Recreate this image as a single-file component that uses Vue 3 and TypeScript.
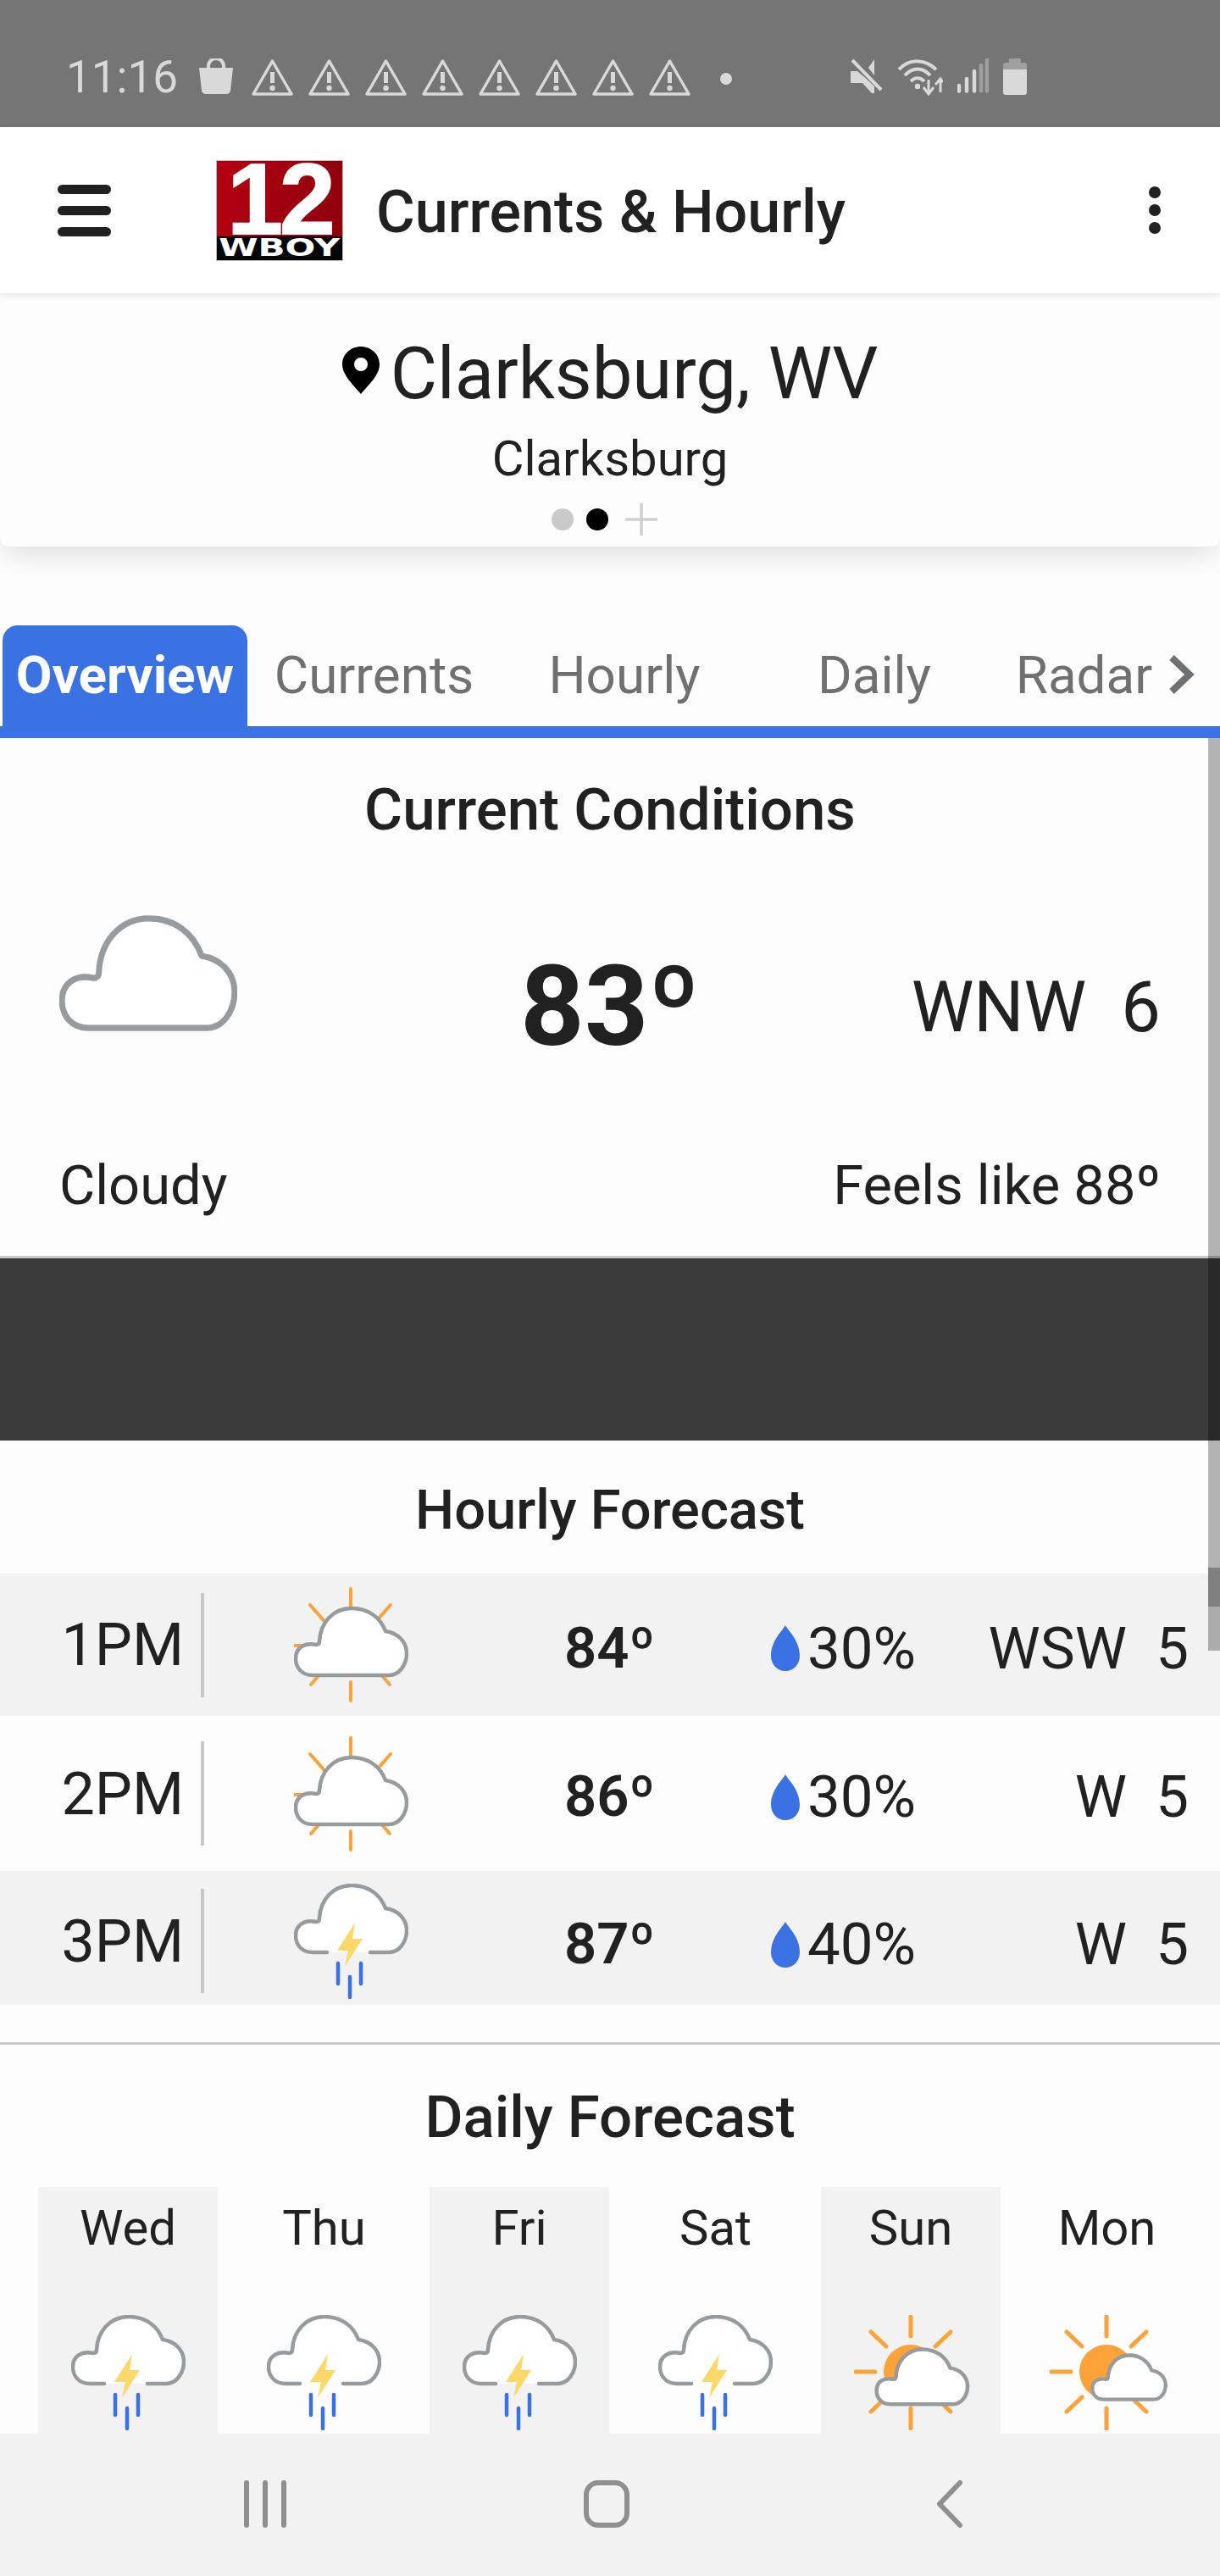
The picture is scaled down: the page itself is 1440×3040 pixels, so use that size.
<template>
  <div class="screen">
    <!-- Shared weather icon shapes -->
    <svg class="defs" width="0" height="0">
      <defs>
        <path id="cloud" d="M22 104H112C124 104 133 92 133 78C133 64 122 54 108 52C102 36 88 25 68 25C46 25 31 42 30 64C30 67 28 68 26 68C12 65 2 72 2 84C2 96 10 104 22 104Z" />
        <symbol id="storm" viewBox="0 0 135 136">
          <path fill="#fff" d="M22 81C10 81 2 73 2 61C2 49 12 42 26 45C28 45 30 44 30 41C31 19 46 2 68 2C88 2 102 13 108 29C122 31 133 41 133 55C133 69 124 81 112 81Z" />
          <path fill="none" stroke="#989b9d" stroke-width="4.5" stroke-linecap="round" stroke-linejoin="round" d="M39 81H22C10 81 2 73 2 61C2 49 12 42 26 45C28 45 30 44 30 41C31 19 46 2 68 2C88 2 102 13 108 29C122 31 133 41 133 55C133 69 124 81 112 81H90" />
          <path fill="#fad96a" d="M72 46L51 79H64L60 98L81 65H69Z" />
          <path stroke="#3a72e4" stroke-width="4.5" stroke-linecap="round" d="M52 94V118M79 94V118M66 110V134" />
        </symbol>
        <symbol id="rays-faint" viewBox="0 0 135 136">
          <path stroke="#fba339" stroke-width="4" stroke-linecap="round" d="M67 2V28M19 21L40 45M114 21L93 45M1 69H24M20 115L32 101M113 115L101 101M67 112V134" />
        </symbol>
        <symbol id="rays" viewBox="0 0 135 136">
          <path stroke="#fba339" stroke-width="5" stroke-linecap="round" d="M67 2V25M20 20L38 37M114 20L96 37M2 67H25M20 114L38 97M114 114L96 97M67 110V134" />
          <circle cx="67" cy="67" r="32" fill="#fba339" />
        </symbol>
      </defs>
    </svg>

    <!-- Status bar -->
    <div class="status-bar">
      <span class="status-time">11:16</span>
      <svg class="status-bag" width="40" height="42" viewBox="0 0 40 42">
        <path d="M11 12V9a9 9 0 0 1 18 0v3" fill="none" stroke="#d9d9d9" stroke-width="4" />
        <path d="M0 11H40L37 38Q36 42 32 42H8Q4 42 3 38Z" fill="#d9d9d9" />
      </svg>
      <svg v-for="n in 8" :key="n" class="status-warn" width="49" height="44" viewBox="0 0 49 44">
        <path d="M24.5 3L47 42H2Z" fill="none" stroke="#d9d9d9" stroke-width="3.5" stroke-linejoin="round" />
        <path d="M24.5 16V29" stroke="#d9d9d9" stroke-width="5" />
        <circle cx="24.5" cy="35" r="3.2" fill="#d9d9d9" />
      </svg>
      <span class="status-dot"></span>
      <div class="status-right">
        <svg width="38" height="41" viewBox="0 0 38 41">
          <path d="M0 15H8L14 20L28 32V41H25L14 29H0ZM21 11L28 1V20Z" fill="#d9d9d9" />
          <path d="M1 1L37 37" stroke="#757575" stroke-width="7" />
          <path d="M2 2L36 37" stroke="#d9d9d9" stroke-width="4" />
        </svg>
        <svg width="54" height="44" viewBox="0 0 54 44">
          <g fill="none" stroke="#d9d9d9" stroke-width="4">
            <path d="M2 13C14 0 32 0 46 13" />
            <path d="M9 20C18 10 30 10 39 20" />
            <path d="M16 27C21 22 27 22 32 27" />
          </g>
          <circle cx="24" cy="33" r="3.2" fill="#d9d9d9" />
          <path d="M37 25V40M31 34L37 42L43 34M51 40V25M45 31L51 24L54 28" fill="none" stroke="#d9d9d9" stroke-width="3" />
        </svg>
        <svg width="37" height="41" viewBox="0 0 37 41">
          <g stroke-width="4.5" stroke-linecap="round">
            <path d="M2 32V38.500M11 24V38.500M20 15V38.500" stroke="#d9d9d9" />
            <path d="M28 8V38.500M35 2V38.500" stroke="#9f9f9f" />
          </g>
        </svg>
        <svg width="28" height="43" viewBox="0 0 28 43">
          <path d="M7 0H21V5H7Z" fill="#9f9f9f" />
          <path d="M0 8Q0 5 3 5H25Q28 5 28 8V13H0Z" fill="#9f9f9f" />
          <path d="M0 13H28V40Q28 43 25 43H3Q0 43 0 40Z" fill="#d9d9d9" />
        </svg>
      </div>
    </div>

    <!-- App bar -->
    <header class="app-bar">
      <div class="hamburger"><span></span><span></span><span></span></div>
      <div class="logo">
        <div class="logo-num">12</div>
        <div class="logo-call"><span>WBOY</span></div>
      </div>
      <h1 class="app-title">Currents &amp; Hourly</h1>
      <div class="kebab"><span></span><span></span><span></span></div>
    </header>

    <div class="scroll-area">
      <!-- Location card -->
      <section class="location-card">
        <div class="location-main">
          <svg class="pin" width="44" height="56" viewBox="0 0 44 56">
            <path fill-rule="evenodd" d="M22 0C10 0 0 9 0 21C0 34 14 46 22 56C30 46 44 34 44 21C44 9 34 0 22 0ZM22 13A8 8 0 1 1 22 29A8 8 0 1 1 22 13Z" />
          </svg>
          <span>Clarksburg, WV</span>
        </div>
        <div class="location-sub">Clarksburg</div>
        <div class="pager">
          <span class="pager-dot"></span>
          <span class="pager-dot active"></span>
          <svg width="38" height="38" viewBox="0 0 38 38">
            <path d="M19 0V38M0 19H38" stroke="#cfcfcf" stroke-width="3.500" />
          </svg>
        </div>
      </section>

      <!-- Tabs -->
      <nav class="tabs">
        <div v-for="(tab, i) in tabs" :key="tab" class="tab" :class="{ active: i === 0 }">{{ tab }}</div>
        <svg class="tab-more" width="32" height="46" viewBox="0 0 32 46">
          <path d="M5 3L26 23L5 43" fill="none" stroke="#6f7072" stroke-width="8" />
        </svg>
      </nav>

      <!-- Current conditions -->
      <section class="current">
        <h2 class="section-title current-title">Current Conditions</h2>
        <div class="current-main">
          <svg class="current-icon" width="210" height="139" viewBox="0 22 135 85" preserveAspectRatio="none">
            <use href="#cloud" fill="#fff" stroke="#989b9d" stroke-width="4.500" stroke-linejoin="round" />
          </svg>
          <div class="current-temp">83º</div>
          <div class="current-wind">WNW&nbsp;&nbsp;6</div>
        </div>
        <div class="current-foot">
          <span>Cloudy</span>
          <span>Feels like 88º</span>
        </div>
      </section>

      <div class="ad-band"></div>

      <!-- Hourly -->
      <section class="hourly">
        <h2 class="section-title hourly-title">Hourly Forecast</h2>
        <div v-for="hour in hours" :key="hour.time" class="hour-row">
          <div class="hour-time">{{ hour.time }}</div>
          <div class="hour-sep"></div>
          <div class="hour-icon">
            <svg v-if="hour.storm" width="135" height="136"><use href="#storm" /></svg>
            <svg v-else width="135" height="136" viewBox="0 0 135 136">
              <use href="#rays-faint" width="135" height="136" />
              <use href="#cloud" fill="#fff" stroke="#989b9d" stroke-width="4.500" stroke-linejoin="round" />
            </svg>
          </div>
          <div class="hour-temp">{{ hour.temp }}º</div>
          <div class="hour-rain">
            <svg width="34" height="54" viewBox="0 0 34 54">
              <path d="M17 0C20 6 34 18 34 36C34 46 27 54 17 54C7 54 0 46 0 36C0 18 14 6 17 0Z" fill="#3a72e4" />
            </svg>
            <span>{{ hour.rain }}%</span>
          </div>
          <div class="hour-wind">{{ hour.wind }}&nbsp;&nbsp;{{ hour.speed }}</div>
        </div>
      </section>

      <!-- Daily -->
      <section class="daily">
        <h2 class="section-title daily-title">Daily Forecast</h2>
        <div class="days">
          <div v-for="day in days" :key="day.name" class="day">
            <div class="day-name">{{ day.name }}</div>
            <svg class="day-icon" width="135" height="136" viewBox="0 0 135 136">
              <use v-if="day.icon === 'storm'" href="#storm" width="135" height="136" />
              <template v-else>
                <use href="#rays" width="135" height="136" />
                <use
                  href="#cloud"
                  fill="#fff"
                  stroke="#989b9d"
                  :stroke-width="day.icon === 'sun' ? 5.5 : 6.5"
                  stroke-linejoin="round"
                  :transform="day.icon === 'sun' ? 'translate(25 20) scale(.82)' : 'translate(49 31) scale(.66)'"
                />
              </template>
            </svg>
          </div>
        </div>
      </section>

      <!-- Overlay scrollbar -->
      <div class="scrollbar"><span class="scrollbar-mark"></span></div>
    </div>

    <!-- Android nav bar -->
    <footer class="nav-bar">
      <svg width="52" height="56" viewBox="0 0 52 56">
        <path d="M4 3V53M26 3V53M48 3V53" stroke="#8f8f8f" stroke-width="6" stroke-linecap="round" />
      </svg>
      <svg width="54" height="56" viewBox="0 0 54 56">
        <rect x="3" y="3" width="48" height="50" rx="14" fill="none" stroke="#8f8f8f" stroke-width="6" />
      </svg>
      <svg width="32" height="56" viewBox="0 0 32 56">
        <path d="M28 3L4 28L28 53" fill="none" stroke="#8f8f8f" stroke-width="6" stroke-linecap="round" stroke-linejoin="round" />
      </svg>
    </footer>
  </div>
</template>

<script setup lang="ts">
interface Hour {
  time: string
  temp: number
  rain: number
  wind: string
  speed: number
  storm: boolean
}

interface Day {
  name: string
  icon: 'storm' | 'sun' | 'sun-small'
}

const tabs: string[] = ['Overview', 'Currents', 'Hourly', 'Daily', 'Radar']

const hours: Hour[] = [
  { time: '1PM', temp: 84, rain: 30, wind: 'WSW', speed: 5, storm: false },
  { time: '2PM', temp: 86, rain: 30, wind: 'W', speed: 5, storm: false },
  { time: '3PM', temp: 87, rain: 40, wind: 'W', speed: 5, storm: true }
]

const days: Day[] = [
  { name: 'Wed', icon: 'storm' },
  { name: 'Thu', icon: 'storm' },
  { name: 'Fri', icon: 'storm' },
  { name: 'Sat', icon: 'storm' },
  { name: 'Sun', icon: 'sun' },
  { name: 'Mon', icon: 'sun-small' }
]
</script>

<style>
html,
body {
  margin: 0;
  background: #fdfdfd;
}
</style>

<style scoped>
.screen {
  width: 1440px;
  height: 3040px;
  display: flex;
  flex-direction: column;
  overflow: hidden;
  background: #fdfdfd;
  color: #212121;
  font-family: Roboto, "Liberation Sans", sans-serif;
}

.defs {
  display: block;
  height: 0;
}

/* Status bar */
.status-bar {
  flex: none;
  height: 150px;
  box-sizing: border-box;
  padding: 69px 0 0 78px;
  display: flex;
  align-items: flex-start;
  background: #757575;
}

.status-time {
  width: 157px;
  font-size: 53px;
  line-height: 44px;
  color: #d9d9d9;
}

.status-bag {
  margin-right: 22px;
}

.status-warn {
  margin-right: 18px;
}

.status-dot {
  width: 14px;
  height: 14px;
  margin: 17px 0 0 17px;
  border-radius: 50%;
  background: #d9d9d9;
}

.status-right {
  margin-left: 140px;
  display: flex;
  align-items: flex-start;
  gap: 17px;
}

/* App bar */
.app-bar {
  flex: none;
  position: relative;
  z-index: 2;
  height: 196px;
  display: flex;
  align-items: center;
  background: #fff;
  box-shadow: 0 2px 10px rgba(0, 0, 0, 0.1);
}

.hamburger {
  width: 63px;
  margin-left: 68px;
  display: flex;
  flex-direction: column;
  gap: 14px;
}

.hamburger span {
  height: 11px;
  border-radius: 6px;
  background: #212121;
}

.logo {
  width: 150px;
  height: 119px;
  margin-left: 124px;
  display: flex;
  flex-direction: column;
  background: linear-gradient(100deg, #b40012, #8c000c);
  border: 1px solid #bbb;
  box-sizing: border-box;
}

.logo-num {
  height: 89px;
  box-sizing: border-box;
  padding-top: 2px;
  text-align: center;
  font-family: "Liberation Sans", sans-serif;
  font-weight: 700;
  font-size: 118px;
  line-height: 87px;
  letter-spacing: -4px;
  color: #fff;
  -webkit-text-stroke: 2px #fff;
}

.logo-call {
  flex: 1;
  display: flex;
  justify-content: center;
  align-items: center;
  background: #05060a;
}

.logo-call span {
  transform: scaleX(1.5);
  font-family: "DejaVu Sans", sans-serif;
  font-weight: 700;
  font-size: 28px;
  line-height: 1;
  color: #fff;
}

.app-title {
  margin: 4px 0 0 39px;
  font-size: 70px;
  font-weight: 500;
  line-height: 1;
  color: #212121;
}

.kebab {
  margin-left: auto;
  margin-right: 70px;
  display: flex;
  flex-direction: column;
  gap: 7px;
}

.kebab span {
  width: 14px;
  height: 14px;
  border-radius: 50%;
  background: #212121;
}

/* Scrolling content */
.scroll-area {
  flex: none;
  position: relative;
  height: 2526px;
  overflow: hidden;
}

.location-card {
  height: 299px;
  box-sizing: border-box;
  padding-top: 53px;
  display: flex;
  flex-direction: column;
  align-items: center;
  background: #fdfdfd;
  border-radius: 0 0 10px 10px;
  box-shadow: 0 16px 30px -6px rgba(0, 0, 0, 0.12);
}

.location-main {
  display: flex;
  align-items: flex-start;
  gap: 13px;
  font-size: 85px;
  line-height: 84px;
}

.pin {
  margin-top: 10px;
}

.location-sub {
  margin-top: 24px;
  font-size: 58px;
  line-height: 68px;
}

.pager {
  margin-top: 19px;
  padding-right: 14px;
  display: flex;
  align-items: center;
  gap: 15px;
}

.pager-dot {
  width: 26px;
  height: 26px;
  border-radius: 50%;
  background: #cacaca;
}

.pager-dot.active {
  background: #000;
}

.pager svg {
  margin-left: 5px;
}

/* Tabs */
.tabs {
  margin-top: 93px;
  height: 133px;
  box-sizing: border-box;
  padding-left: 3px;
  display: grid;
  grid-template-columns: 289px 296px 295px 295px 200px auto;
  align-items: stretch;
  border-bottom: 14px solid #3a72e4;
}

.tab {
  padding: 0 0 2px 3px;
  display: flex;
  align-items: center;
  justify-content: center;
  font-size: 62px;
  line-height: 1;
  color: #6f7072;
}

.tab.active {
  padding-left: 0;
  background: #3a72e4;
  border-radius: 18px 18px 0 0;
  color: #fff;
  font-weight: 700;
}

.tab-more {
  align-self: center;
  margin-top: -3px;
}

.section-title {
  margin: 0;
  text-align: center;
  font-weight: 500;
  line-height: 1;
}

/* Current conditions */
.current {
  height: 614px;
  box-sizing: border-box;
  padding-top: 50px;
  border-bottom: 3px solid #c9c9c9;
}

.current-title {
  font-size: 69px;
}

.current-main {
  height: 218px;
  margin-top: 89px;
  padding: 0 70px;
  display: grid;
  grid-template-columns: 1fr auto 1fr;
  align-items: center;
}

.current-icon {
  align-self: start;
}

.current-temp {
  font-size: 132px;
  font-weight: 700;
  line-height: 1;
}

.current-wind {
  text-align: right;
  font-size: 83px;
  line-height: 1;
}

.current-foot {
  margin-top: 70px;
  padding: 0 70px;
  display: flex;
  justify-content: space-between;
  font-size: 65px;
  line-height: 1;
}

.ad-band {
  height: 215px;
  background: #3b3b3b;
}

/* Hourly */
.hourly {
  height: 713px;
  box-sizing: border-box;
  padding-top: 50px;
  border-bottom: 3px solid #c9c9c9;
}

.hourly-title {
  height: 107px;
  font-size: 65px;
}

.hour-row {
  display: grid;
  grid-template-columns: 237px 4px 241px 428px 220px 1fr;
  align-items: center;
}

.hour-row:nth-of-type(1) {
  height: 168px;
  background: #f2f2f2;
}

.hour-row:nth-of-type(2) {
  height: 183px;
}

.hour-row:nth-of-type(3) {
  height: 158px;
  box-sizing: border-box;
  padding-top: 7px;
  background: #f2f2f2;
}

.hour-time {
  padding-right: 20px;
  text-align: right;
  font-size: 70px;
  line-height: 1;
}

.hour-sep {
  height: 123px;
  background: #c8c8c8;
}

.hour-icon {
  padding-left: 106px;
  display: flex;
}

.hour-temp {
  padding: 8px 0 0 184px;
  font-size: 67px;
  font-weight: 600;
  line-height: 1;
}

.hour-rain {
  padding-top: 8px;
  display: flex;
  align-items: center;
  gap: 9px;
  font-size: 69px;
  line-height: 1;
}

.hour-wind {
  padding: 8px 37px 0 0;
  text-align: right;
  font-size: 69px;
  line-height: 1;
}

/* Daily */
.daily {
  padding-top: 51px;
}

.daily-title {
  height: 117px;
  font-size: 69px;
}

.days {
  padding-left: 36px;
  display: grid;
  grid-template-columns: repeat(6, 231px);
}

.day {
  height: 300px;
  box-sizing: border-box;
  padding-top: 18px;
  display: flex;
  flex-direction: column;
  align-items: center;
}

.day:nth-child(odd) {
  margin: 0 10px 0 9px;
  background: #f2f2f2;
}

.day-name {
  font-size: 58px;
  line-height: 60px;
}

.day-icon {
  margin-top: 73px;
  flex: none;
  overflow: visible;
}

/* Overlay scrollbar */
.scrollbar {
  position: absolute;
  top: 525px;
  right: 0;
  width: 14px;
  height: 1077px;
  background: rgba(0, 0, 0, 0.29);
}

.scrollbar-mark {
  position: absolute;
  top: 979px;
  left: 0;
  right: 0;
  height: 46px;
  background: #808080;
}

/* Nav bar */
.nav-bar {
  flex: none;
  height: 168px;
  box-sizing: border-box;
  padding: 55px 0 0 287px;
  display: flex;
  align-items: flex-start;
  gap: 350px;
  background: #f2f2f2;
}

.nav-bar svg:last-child {
  margin-left: 12px;
}
</style>
